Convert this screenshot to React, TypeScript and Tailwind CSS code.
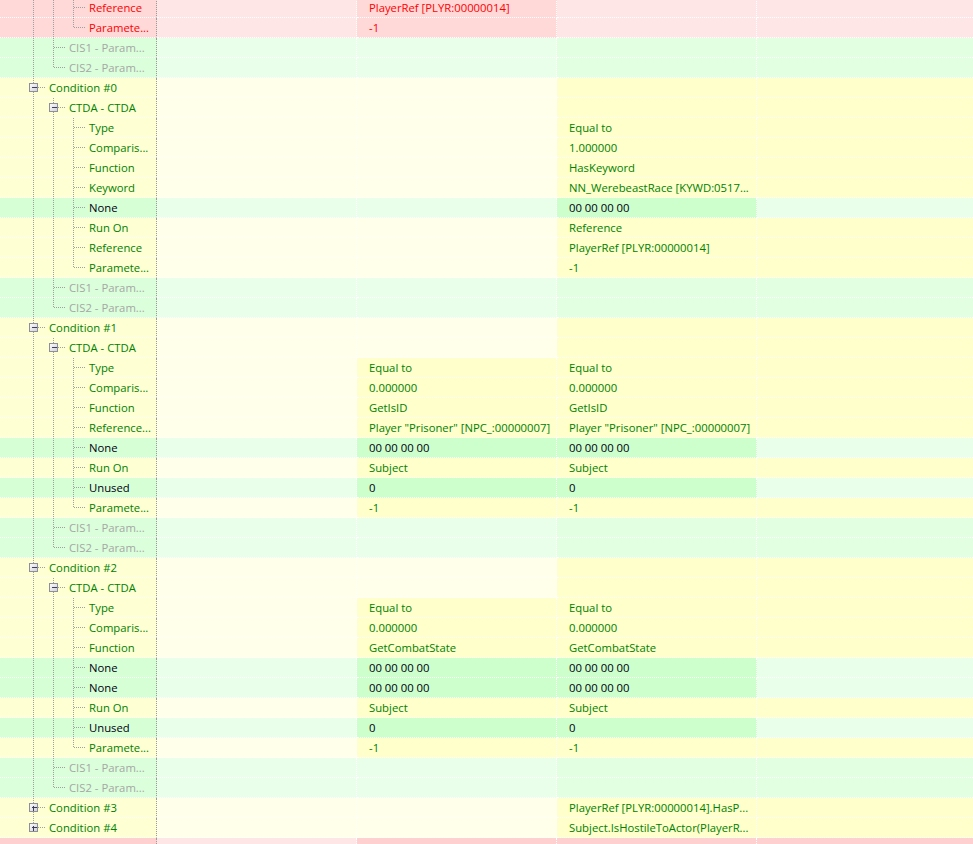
import React from "react";

type Kind = "red" | "cis" | "yel" | "grn" | "redTop";

type Row = {
  kind: Kind;
  d: number;
  label: string;
  box?: "minus" | "plus";
  lines: string[];
  b?: string;
  c?: string;
};

const STY: Record<Kind, { tree: string; a: string; b: string; bv: string; c: string; d: string; label: string; val: string }> = {
  red: {
    tree: "bg-[#FFD8D8]",
    a: "bg-[#FFE6E6]",
    b: "bg-[#FFD8D8]",
    bv: "bg-[#FFD8D8]",
    c: "bg-[#FFE6E6]",
    d: "bg-[#FFE6E6]",
    label: "text-[#FF0000]",
    val: "text-[#FF0000]",
  },
  redTop: {
    tree: "bg-[#FFD0D0]",
    a: "bg-[#FFE6E6]",
    b: "bg-[#FFD0D0]",
    bv: "bg-[#FFD0D0]",
    c: "bg-[#FFD0D0]",
    d: "bg-[#FFD0D0]",
    label: "text-[#FF0000]",
    val: "text-[#FF0000]",
  },
  cis: {
    tree: "bg-[#DAFFDA]",
    a: "bg-[#EAFFEA]",
    b: "bg-[#EAFFEA]",
    bv: "bg-[#EAFFEA]",
    c: "bg-[#E2FFE2]",
    d: "bg-[#E2FFE2]",
    label: "text-[#A6A6A6]",
    val: "text-[#A6A6A6]",
  },
  yel: {
    tree: "bg-[#FFFFD4]",
    a: "bg-[#FFFFEA]",
    b: "bg-[#FFFFEA]",
    bv: "bg-[#FFFFCC]",
    c: "bg-[#FFFFCC]",
    d: "bg-[#FFFFCC]",
    label: "text-[#008000]",
    val: "text-[#008000]",
  },
  grn: {
    tree: "bg-[#D6FFD6]",
    a: "bg-[#EAFFEA]",
    b: "bg-[#EAFFEA]",
    bv: "bg-[#CCFFCC]",
    c: "bg-[#CCFFCC]",
    d: "bg-[#EAFFEA]",
    label: "text-[#000010]",
    val: "text-[#000010]",
  },
};

const F = ["33f", "53f", "73f"];
const L = ["33f", "53f", "73t"];

const rows: Row[] = [
  { kind: "red", d: 3, label: "Reference", lines: F, b: "PlayerRef [PLYR:00000014]" },
  { kind: "red", d: 3, label: "Paramete...", lines: L, b: "-1" },
  { kind: "cis", d: 2, label: "CIS1 - Param...", lines: ["33f", "53f"] },
  { kind: "cis", d: 2, label: "CIS2 - Param...", lines: ["33f", "53t"] },
  // Condition #0
  { kind: "yel", d: 1, label: "Condition #0", box: "minus", lines: ["33f"] },
  { kind: "yel", d: 2, label: "CTDA - CTDA", box: "minus", lines: ["33f", "53f"] },
  { kind: "yel", d: 3, label: "Type", lines: F, c: "Equal to" },
  { kind: "yel", d: 3, label: "Comparis...", lines: F, c: "1.000000" },
  { kind: "yel", d: 3, label: "Function", lines: F, c: "HasKeyword" },
  { kind: "yel", d: 3, label: "Keyword", lines: F, c: "NN_WerebeastRace [KYWD:0517..." },
  { kind: "grn", d: 3, label: "None", lines: F, c: "00 00 00 00" },
  { kind: "yel", d: 3, label: "Run On", lines: F, c: "Reference" },
  { kind: "yel", d: 3, label: "Reference", lines: F, c: "PlayerRef [PLYR:00000014]" },
  { kind: "yel", d: 3, label: "Paramete...", lines: L, c: "-1" },
  { kind: "cis", d: 2, label: "CIS1 - Param...", lines: ["33f", "53f"] },
  { kind: "cis", d: 2, label: "CIS2 - Param...", lines: ["33f", "53t"] },
  // Condition #1
  { kind: "yel", d: 1, label: "Condition #1", box: "minus", lines: ["33f"] },
  { kind: "yel", d: 2, label: "CTDA - CTDA", box: "minus", lines: ["33f", "53f"] },
  { kind: "yel", d: 3, label: "Type", lines: F, b: "Equal to", c: "Equal to" },
  { kind: "yel", d: 3, label: "Comparis...", lines: F, b: "0.000000", c: "0.000000" },
  { kind: "yel", d: 3, label: "Function", lines: F, b: "GetIsID", c: "GetIsID" },
  {
    kind: "yel",
    d: 3,
    label: "Reference...",
    lines: F,
    b: 'Player "Prisoner" [NPC_:00000007]',
    c: 'Player "Prisoner" [NPC_:00000007]',
  },
  { kind: "grn", d: 3, label: "None", lines: F, b: "00 00 00 00", c: "00 00 00 00" },
  { kind: "yel", d: 3, label: "Run On", lines: F, b: "Subject", c: "Subject" },
  { kind: "grn", d: 3, label: "Unused", lines: F, b: "0", c: "0" },
  { kind: "yel", d: 3, label: "Paramete...", lines: L, b: "-1", c: "-1" },
  { kind: "cis", d: 2, label: "CIS1 - Param...", lines: ["33f", "53f"] },
  { kind: "cis", d: 2, label: "CIS2 - Param...", lines: ["33f", "53t"] },
  // Condition #2
  { kind: "yel", d: 1, label: "Condition #2", box: "minus", lines: ["33f"] },
  { kind: "yel", d: 2, label: "CTDA - CTDA", box: "minus", lines: ["33f", "53f"] },
  { kind: "yel", d: 3, label: "Type", lines: F, b: "Equal to", c: "Equal to" },
  { kind: "yel", d: 3, label: "Comparis...", lines: F, b: "0.000000", c: "0.000000" },
  { kind: "yel", d: 3, label: "Function", lines: F, b: "GetCombatState", c: "GetCombatState" },
  { kind: "grn", d: 3, label: "None", lines: F, b: "00 00 00 00", c: "00 00 00 00" },
  { kind: "grn", d: 3, label: "None", lines: F, b: "00 00 00 00", c: "00 00 00 00" },
  { kind: "yel", d: 3, label: "Run On", lines: F, b: "Subject", c: "Subject" },
  { kind: "grn", d: 3, label: "Unused", lines: F, b: "0", c: "0" },
  { kind: "yel", d: 3, label: "Paramete...", lines: L, b: "-1", c: "-1" },
  { kind: "cis", d: 2, label: "CIS1 - Param...", lines: ["33f", "53f"] },
  { kind: "cis", d: 2, label: "CIS2 - Param...", lines: ["33f", "53t"] },
  { kind: "yel", d: 1, label: "Condition #3", box: "plus", lines: ["33f"], c: "PlayerRef [PLYR:00000014].HasP..." },
  { kind: "yel", d: 1, label: "Condition #4", box: "plus", lines: ["33t"], c: "Subject.IsHostileToActor(PlayerR..." },
  { kind: "redTop", d: 0, label: "Effect #2", lines: [] },
];

function TreeLines({ row }: { row: Row }) {
  const w = 27 + 20 * row.d;
  const cx = 13 + 20 * row.d;
  return (
    <svg width={Math.max(w, 7)} height={19} className="shrink-0 block" shapeRendering="crispEdges">
      <defs>
        <linearGradient id="boxg" x1="0" y1="0" x2="1" y2="1">
          <stop offset="0" stopColor="#FFFFFF" />
          <stop offset="1" stopColor="#CFCFD6" />
        </linearGradient>
      </defs>
      {row.lines.map((l) => {
        const x = parseInt(l, 10) + 0.5;
        const full = l.endsWith("f");
        return (
          <line
            key={l}
            x1={x}
            x2={x}
            y1={0}
            y2={full ? 19 : 10}
            stroke="#A0A0A0"
            strokeWidth={1}
            strokeDasharray="1 1"
          />
        );
      })}
      {row.d > 0 && (
        <line
          x1={cx + 1}
          x2={w - 1}
          y1={9.5}
          y2={9.5}
          stroke="#A0A0A0"
          strokeWidth={1}
          strokeDasharray="1 1"
        />
      )}
      {row.box && (
        <g>
          <rect x={cx - 3.5} y={5.5} width={8} height={8} fill="url(#boxg)" stroke="#8E8F99" />
          <line x1={cx - 1.5} x2={cx + 3.5} y1={9.5} y2={9.5} stroke="#3B3F5C" />
          {row.box === "plus" && <line x1={cx + 0.5} x2={cx + 0.5} y1={7.5} y2={12.5} stroke="#3B3F5C" />}
        </g>
      )}
    </svg>
  );
}

function RowView({ row }: { row: Row }) {
  const s = STY[row.kind];
  const cell = "h-5 border-r border-b border-dotted border-white overflow-hidden whitespace-nowrap";
  return (
    <div className="flex h-5">
      <div
        className={`w-[157px] shrink-0 h-5 flex items-start overflow-hidden whitespace-nowrap border-b border-r border-dotted border-b-white border-r-[#9A9A9A] ${s.tree}`}
      >
        <TreeLines row={row} />
        <span className={`ml-[2px] leading-[19px] ${s.label}`}>{row.label}</span>
      </div>
      <div className={`w-[200px] shrink-0 ${cell} ${s.a}`} />
      <div className={`w-[200px] shrink-0 pl-3 leading-[19px] ${cell} ${row.b ? s.bv : s.b} ${s.val}`}>{row.b}</div>
      <div className={`w-[200px] shrink-0 pl-3 leading-[19px] ${cell} ${s.c} ${s.val}`}>{row.c}</div>
      <div className={`flex-1 h-5 border-b border-dotted border-white ${s.d}`} />
    </div>
  );
}

export default function App() {
  return (
    <div
      className="w-[973px] h-[844px] overflow-hidden bg-white text-[11.3px]"
      style={{ fontFamily: '"Open Sans", "Noto Sans", sans-serif' }}
    >
      <div className="-mt-[2px]">
        {rows.map((r, i) => (
          <RowView key={i} row={r} />
        ))}
      </div>
    </div>
  );
}
